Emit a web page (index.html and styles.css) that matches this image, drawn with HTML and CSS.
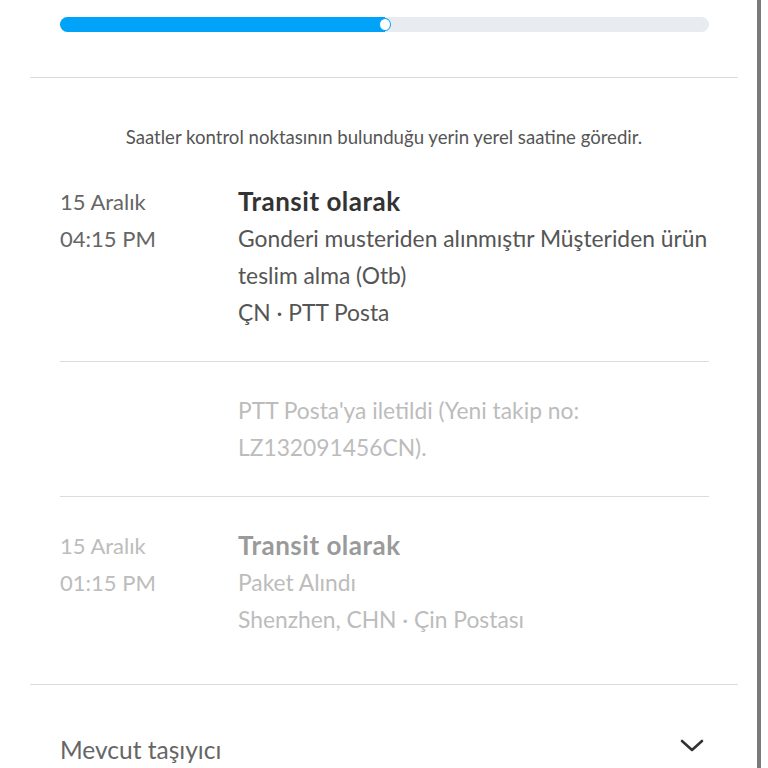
FILE: index.html
```html
<!DOCTYPE html>
<html lang="tr">
<head>
<meta charset="utf-8">
<link rel="stylesheet" href="styles.css">
</head>
<body>
<div class="page">
  <div class="main">
    <div class="progress-wrap">
      <div class="progress">
        <div class="fill" style="width: 50%"></div>
        <div class="knob" style="left: 50%"></div>
      </div>
    </div>
    <div class="section">
      <p class="note">Saatler kontrol noktasının bulunduğu yerin yerel saatine göredir.</p>
      <div class="events">
        <div class="event">
          <div class="when">
            <div>15 Aralık</div>
            <div>04:15 PM</div>
          </div>
          <div class="what">
            <div class="title">Transit olarak</div>
            <div class="desc">Gonderi musteriden alınmıştır Müşteriden ürün teslim alma (Otb)</div>
            <div class="desc">ÇN · PTT Posta</div>
          </div>
        </div>
        <div class="event muted">
          <div class="when"></div>
          <div class="what">
            <div class="desc">PTT Posta'ya iletildi (Yeni takip no: LZ132091456CN).</div>
          </div>
        </div>
        <div class="event muted last">
          <div class="when">
            <div>15 Aralık</div>
            <div>01:15 PM</div>
          </div>
          <div class="what">
            <div class="title">Transit olarak</div>
            <div class="desc">Paket Alındı</div>
            <div class="desc">Shenzhen, CHN · Çin Postası</div>
          </div>
        </div>
      </div>
    </div>
    <div class="carrier">
      <span>Mevcut taşıyıcı</span>
      <svg class="chev" width="24" height="14" viewBox="0 0 24 14"><polyline points="2,2 12,11 22,2" fill="none" stroke="#333" stroke-width="2.6" stroke-linecap="round" stroke-linejoin="round"/></svg>
    </div>
  </div>
  <div class="scrollbar"></div>
</div>
</body>
</html>
```
FILE: styles.css
```css
html, body {
  margin: 0;
  padding: 0;
  background: #fff;
}
body {
  font-family: Lato, "Open Sans", sans-serif;
  color: #333;
}
.page {
  display: flex;
  width: 768px;
  height: 768px;
  overflow: hidden;
}
.main {
  width: 727px;
  padding-left: 30px;
  flex: none;
}
.scrollbar {
  width: 4px;
  background: #7a7a7a;
  flex: none;
}
.progress-wrap {
  padding: 17px 29px 0 30px;
  height: 60px;
  border-bottom: 1px solid #dcdcdc;
  width: 649px;
}
.progress {
  position: relative;
  height: 15px;
  background: #e8ecf0;
  border-radius: 8px;
}
.fill {
  height: 15px;
  background: #00a3f7;
  border-radius: 8px 0 0 8px;
}
.knob {
  position: absolute;
  top: 1px;
  width: 10px;
  height: 11px;
  margin-left: -6px;
  border: 1px solid #00a3f7;
  border-radius: 50%;
  background: #fff;
}
.section {
  width: 708px;
  border-bottom: 1px solid #dcdcdc;
  padding-bottom: 46px;
}
.note {
  margin: 0;
  padding-top: 48px;
  text-align: center;
  font-size: 18.6px;
  line-height: 22px;
  color: #555;
}
.events {
  padding: 35px 29px 0 30px;
}
.event {
  display: flex;
  padding: 30px 0;
  border-bottom: 1px solid #dcdcdc;
  font-size: 22.8px;
  line-height: 37px;
}
.event:first-child {
  padding-top: 0;
}
.event.last {
  border-bottom: none;
  padding-bottom: 0;
}
.when {
  width: 178px;
  flex: none;
  color: #666;
  font-size: 22px;
}
.what {
  flex: 1;
  color: #555;
}
.title {
  font-weight: 700;
  font-size: 26px;
  letter-spacing: 0.5px;
  color: #333;
}
.muted .when,
.muted .what {
  color: #bcbcbc;
}
.muted .title {
  color: #9a9a9a;
}
.carrier {
  display: flex;
  justify-content: space-between;
  align-items: center;
  width: 649px;
  padding: 50px 0 0 30px;
  font-size: 24.5px;
  line-height: 30px;
  color: #666;
}
.chev {
  margin-right: 5px;
  margin-top: -8px;
}
```
